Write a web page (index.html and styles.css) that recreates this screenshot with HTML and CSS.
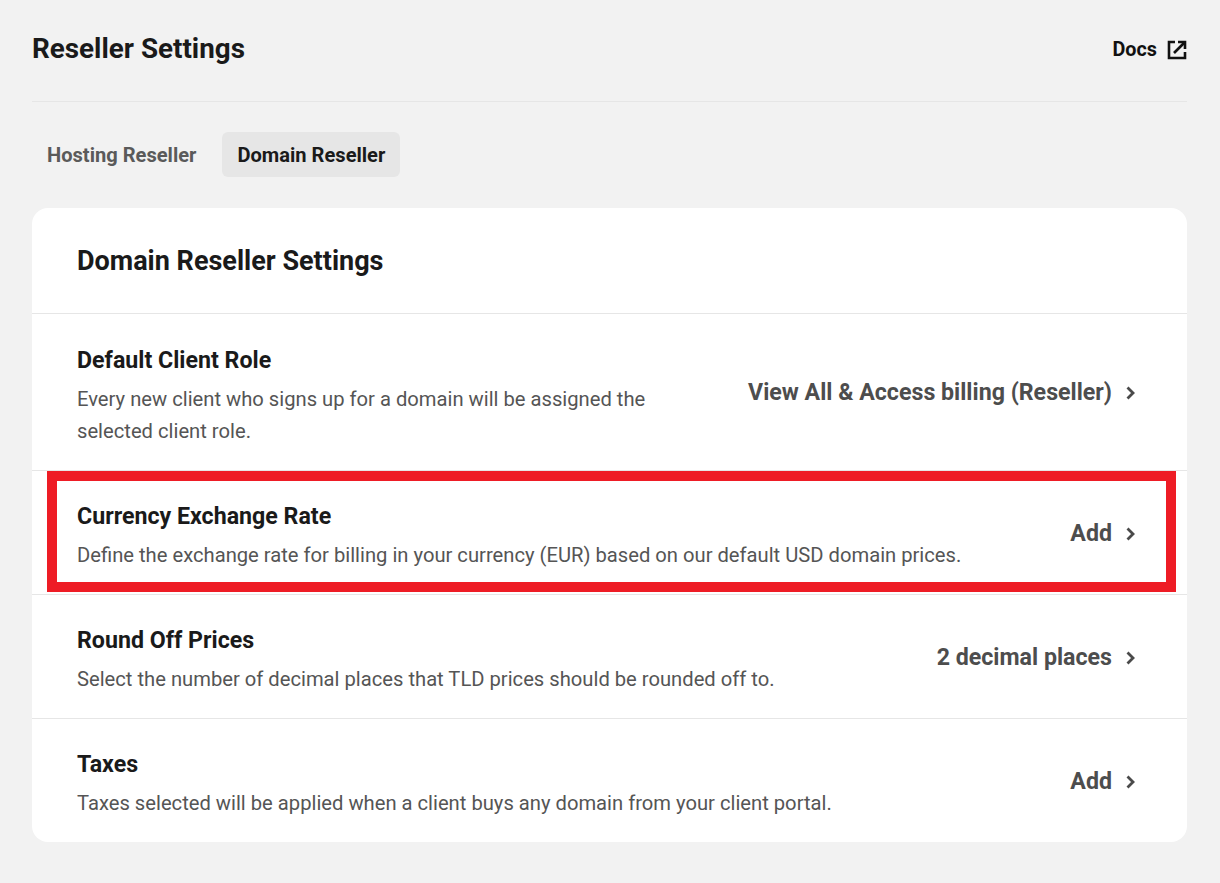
FILE: index.html
```html
<!DOCTYPE html>
<html lang="en">
<head>
    <meta charset="UTF-8">
    <title>Reseller Settings</title>
    <link rel="stylesheet" href="styles.css">
</head>
<body>
    <div class="page">
        <header class="page-header">
            <h1>Reseller Settings</h1>
            <a class="docs-link" href="#">Docs
                <svg width="20" height="20" viewBox="0 0 20 20" fill="none" stroke="#111" stroke-width="2.6">
                    <path d="M8 2H2V18H18V12"/>
                    <path d="M7 13L17.5 2.5"/>
                    <path d="M11 2H18V9"/>
                </svg>
            </a>
        </header>

        <nav class="tabs">
            <a class="tab" href="#">Hosting Reseller</a>
            <a class="tab active" href="#">Domain Reseller</a>
        </nav>

        <section class="card">
            <h2 class="card-title">Domain Reseller Settings</h2>

            <div class="row row-tall">
                <div class="row-text">
                    <h3>Default Client Role</h3>
                    <p class="narrow">Every new client who signs up for a domain will be assigned the selected client role.</p>
                </div>
                <a class="row-action" href="#">View All &amp; Access billing (Reseller)
                    <svg class="chevron" width="9" height="14" viewBox="0 0 9 14" fill="none" stroke="#4a4a4a" stroke-width="2.8"><path d="M1.5 1.5L7 7L1.5 12.5"/></svg>
                </a>
            </div>

            <div class="row highlighted">
                <div class="row-text">
                    <h3>Currency Exchange Rate</h3>
                    <p>Define the exchange rate for billing in your currency (EUR) based on our default USD domain prices.</p>
                </div>
                <a class="row-action" href="#">Add
                    <svg class="chevron" width="9" height="14" viewBox="0 0 9 14" fill="none" stroke="#4a4a4a" stroke-width="2.8"><path d="M1.5 1.5L7 7L1.5 12.5"/></svg>
                </a>
                <div class="highlight-box"></div>
            </div>

            <div class="row">
                <div class="row-text">
                    <h3>Round Off Prices</h3>
                    <p>Select the number of decimal places that TLD prices should be rounded off to.</p>
                </div>
                <a class="row-action" href="#">2 decimal places
                    <svg class="chevron" width="9" height="14" viewBox="0 0 9 14" fill="none" stroke="#4a4a4a" stroke-width="2.8"><path d="M1.5 1.5L7 7L1.5 12.5"/></svg>
                </a>
            </div>

            <div class="row">
                <div class="row-text">
                    <h3>Taxes</h3>
                    <p>Taxes selected will be applied when a client buys any domain from your client portal.</p>
                </div>
                <a class="row-action" href="#">Add
                    <svg class="chevron" width="9" height="14" viewBox="0 0 9 14" fill="none" stroke="#4a4a4a" stroke-width="2.8"><path d="M1.5 1.5L7 7L1.5 12.5"/></svg>
                </a>
            </div>
        </section>
    </div>
</body>
</html>
```

FILE: styles.css
```css
* {
    box-sizing: border-box;
}
body {
    font-family: Roboto, "Liberation Sans", sans-serif;
    background-color: #f2f2f2;
    color: #1a1a1a;
    margin: 0;
}
a {
    text-decoration: none;
}
.page {
    padding: 0 33px 41px 32px;
}
.page-header {
    display: flex;
    justify-content: space-between;
    align-items: center;
    height: 102px;
    padding-bottom: 4px;
    border-bottom: 1px solid #e6e6e6;
}
h1 {
    font-size: 27.8px;
    font-weight: 700;
    line-height: 32px;
    margin: 0;
}
.docs-link {
    display: flex;
    align-items: center;
    gap: 10px;
    color: #111;
    font-size: 19.8px;
    font-weight: 700;
    line-height: 26px;
    padding-top: 3px;
}
.tabs {
    display: flex;
    gap: 11px;
    margin: 30px 0 31px;
}
.tab {
    height: 45px;
    line-height: 47px;
    padding: 0 15px;
    border-radius: 6px;
    color: #5a5a5a;
    font-size: 20.1px;
    font-weight: 700;
}
.tab.active {
    background-color: #e6e6e6;
    color: #1a1a1a;
}
.card {
    background-color: white;
    border-radius: 16px;
}
.card-title {
    height: 106px;
    margin: 0;
    padding: 0 45px;
    line-height: 106px;
    font-size: 27px;
    font-weight: 700;
    border-bottom: 1px solid #e6e6e6;
}
.row {
    position: relative;
    display: flex;
    justify-content: space-between;
    align-items: center;
    height: 124px;
    padding: 0 52px 0 45px;
    border-bottom: 1px solid #e6e6e6;
}
.row:last-child {
    height: 123px;
    border-bottom: none;
}
.row-tall {
    height: 157px;
}
.row-text {
    padding-top: 7px;
}
.row-text h3 {
    font-size: 23.2px;
    font-weight: 700;
    line-height: 28px;
    margin: 0 0 9px;
    padding-top: 1px;
}
.row-text p {
    font-size: 20.2px;
    line-height: 32px;
    color: #555;
    margin: 0;
}
.row-text p.narrow {
    width: 600px;
}
.row-action {
    display: flex;
    align-items: center;
    flex-shrink: 0;
    gap: 14px;
    color: #4d4d4d;
    font-size: 23.2px;
    font-weight: 700;
}
.chevron {
    margin-top: 2px;
}
/* caixa vermelha por cima da linha */
.highlight-box {
    position: absolute;
    top: 0;
    left: 15px;
    right: 11px;
    bottom: 2px;
    border: 10px solid #ee1c25;
}
```
